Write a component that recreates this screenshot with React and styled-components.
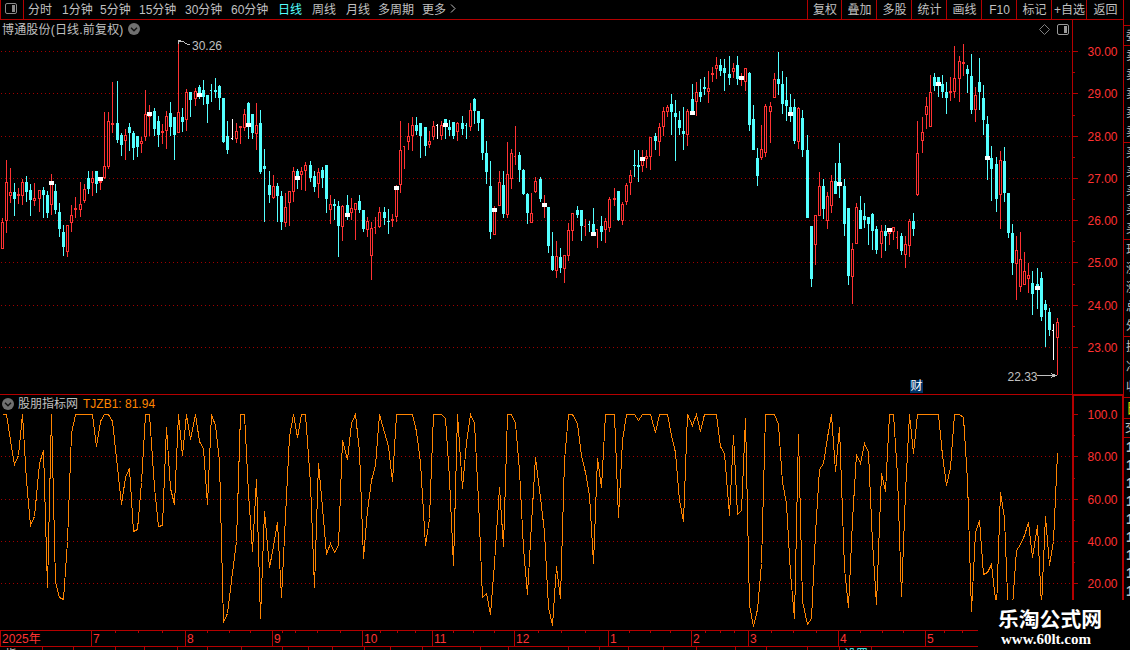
import React from 'react';
import styled, { createGlobalStyle } from 'styled-components';

const RED = '#b40000';
const HOT = '#ff3232';
const CYAN = '#54ffff';
const GRAY = '#c0c0c0';
const ORANGE = '#ff8400';
const FONT = '"Liberation Sans", "Noto Sans CJK SC", sans-serif';

const GlobalStyle = createGlobalStyle`
  * { box-sizing: border-box; }
  body { margin: 0; background: #000; overflow: hidden; }
  svg { display: block; }
  svg text { font-family: ${FONT}; font-size: 12px; }
`;

const Page = styled.div`
  position: relative;
  display: flex;
  width: 1130px;
  height: 650px;
  overflow: hidden;
  background: #000;
  color: ${GRAY};
  font-family: ${FONT};
  font-size: 12px;
`;

const Main = styled.div`
  display: flex;
  flex-direction: column;
  width: 1123px;
  flex: none;
`;

const Toolbar = styled.div`
  display: flex;
  height: 20px;
  flex: none;
  border-bottom: 1px solid ${RED};
  line-height: 20px;
  white-space: nowrap;
`;

const IconCell = styled.div`
  width: 24px;
  padding: 3px 0 0 4px;
  border-left: 1px solid ${RED};
  border-right: 1px solid ${RED};
`;

const Periods = styled.div`
  display: flex;
  flex: 1;
  padding-left: 4px;
`;

const Period = styled.span`
  width: ${p => p.$w}px;
  color: ${p => (p.$active ? CYAN : GRAY)};
`;

const Tools = styled.div`
  display: flex;
  flex: none;
`;

const Tool = styled.div`
  display: flex;
  justify-content: center;
  width: ${p => p.$w || 35}px;
  height: 19px;
  padding-left: 1px;
  border-left: 1px solid ${RED};
`;

const Pane = styled.div`
  position: relative;
  display: flex;
  flex: none;
  height: ${p => p.$h}px;
`;

const PaneTitle = styled.div`
  position: absolute;
  left: 0;
  top: 0;
  display: flex;
  align-items: center;
  gap: 4px;
  height: 18px;
  padding-left: 2px;
  line-height: 18px;
  white-space: nowrap;
`;

const StockName = styled.span`
  padding-top: 2px;
  letter-spacing: 0.18px;
`;

const Reading = styled.span`
  color: ${ORANGE};
  padding-left: 1px;
`;

const PaneIcons = styled.div`
  position: absolute;
  right: 54px;
  top: 4px;
  display: flex;
  gap: 6px;
`;

const Badge = styled.div`
  position: absolute;
  left: 910px;
  top: 360px;
  width: 13px;
  height: 13px;
  background: #003468;
  color: #fff;
  line-height: 13px;
  text-align: center;
`;

const Divider = styled.div`
  height: 1px;
  flex: none;
  background: ${RED};
`;

const Strip = styled.div`
  position: relative;
  height: 3px;
  overflow: hidden;
`;

const Ticker = styled.span`
  position: absolute;
  top: 1px;
  left: ${p => p.$x}px;
  line-height: 14px;
  color: ${p => p.$color};
`;

const Side = styled.div`
  display: flex;
  flex-direction: column;
  width: 7px;
  height: 600px;
  padding-top: 25px;
  overflow: hidden;
  border-left: 1px solid ${RED};
`;

const SideGroup = styled.div`
  display: flex;
  flex-direction: column;
  justify-content: space-around;
  flex: none;
  height: ${p => p.$h}px;
  padding-left: ${p => p.$pad ?? 2}px;
  border-top: 1px solid ${RED};
  color: ${p => p.$color || GRAY};
  font-size: ${p => p.$size || 12}px;
  font-weight: ${p => (p.$bold ? 700 : 400)};
  line-height: 1;
  white-space: nowrap;
`;

const Watermark = styled.div`
  position: absolute;
  left: 978px;
  top: 600px;
  width: 152px;
  height: 50px;
  padding: 6px 0 0 20px;
  background: #000;
  color: #fff;
`;

const MarkName = styled.div`
  font: bold 20.8px/25px "Noto Sans CJK SC", sans-serif;
`;

const MarkUrl = styled.div`
  padding-left: 3px;
  font: bold 15px/16px "Liberation Serif", serif;
`;

const periods = [
  ['分时', 34], ['1分钟', 38], ['5分钟', 39], ['15分钟', 46], ['30分钟', 46], ['60分钟', 47],
  ['日线', 34], ['周线', 34], ['月线', 32], ['多周期', 44], ['更多', 27],
];
const tools = ['复权', '叠加', '多股', '统计', '画线', 'F10', '标记', '+自选', '返回'];

// kind, high, body top, body bottom, low, marker
const candles = `
r 218 222 249 249|r 160 182 221 233|r 168 192 196 203|c 183 192 199 216|r 188 194 196 204|r 179 182 196 205
c 176 182 192 202|c 184 190 200 216|r 183 198 201 206|r 190 190 199 212|c 187 190 195 218|c 191 195 213 218
r 174 184 205 215 181|c 184 191 210 214|c 203 212 229 237|c 225 232 247 256|r 225 225 252 257|r 205 215 223 232
r 197 208 210 218|r 182 204 210 217|r 184 189 201 203|c 171 178 189 194|r 171 178 183 196|c 171 171 184 193
r 177 181 183 190 177|r 112 166 178 179|r 112 121 167 169|r 82 123 125 133|c 81 123 140 143|c 133 135 145 156
r 129 135 141 160|c 123 127 133 151|c 131 133 148 160|c 136 136 147 157|r 137 141 144 153|r 90 114 137 141
r 105 114 117 136 112|c 108 111 129 136|c 116 121 135 147|r 124 131 133 144|r 111 116 131 149|c 102 113 127 136
c 117 117 135 160|r 40 112 133 133|c 108 117 122 132|r 89 92 120 131|c 92 92 100 117|r 88 91 99 106
c 85 87 96 99 93|c 80 90 97 105|c 95 95 104 123|c 84 90 91 102|c 78 90 92 98|c 85 86 98 110
c 98 98 142 143|c 121 136 150 154|w 119 138 139 140|r 123 131 139 143|r 126 126 128 144|r 109 114 128 131
c 102 103 127 139 123|c 114 114 133 139|r 103 125 134 150|c 110 123 172 174|c 149 166 169 222|c 171 185 195 203
r 175 186 198 199|c 183 186 196 222|c 191 196 222 230|r 193 207 223 227|r 191 191 203 226|r 167 171 192 202
c 169 171 176 189 176|r 167 171 175 190|r 162 165 171 191|c 161 165 178 182|c 171 176 187 192|r 168 172 184 198
c 167 170 178 188|c 165 165 199 213|r 195 204 210 224|c 199 204 206 220|c 201 206 226 257|r 205 206 227 241
c 195 205 215 220 213|r 198 208 213 220|r 203 203 210 240|c 195 201 210 213|c 210 210 229 232|r 217 221 230 237
r 222 228 256 280|r 217 227 228 234|r 207 212 227 228|c 207 212 218 225|d 209 221 222 234|r 214 219 221 227
r 185 189 217 222 186|r 121 150 185 193|r 146 146 147 169|r 123 136 142 150|r 117 125 136 151|c 117 125 131 135
c 123 123 136 158|c 127 127 146 156|r 131 141 145 148|r 121 126 137 140|w 124 125 126 139|r 121 125 136 140
c 119 119 126 139 123|c 120 127 130 136|c 122 122 136 139|r 122 123 132 141|c 116 123 129 135|c 123 125 126 139
r 103 110 127 131|c 98 99 111 124|c 111 111 123 131|c 119 119 153 160|c 141 153 172 184|c 161 186 232 239
r 206 210 235 235 208|r 171 182 206 206|c 171 185 214 218|r 142 174 215 218|r 149 153 179 189|r 126 156 157 165
c 152 155 170 182|c 169 170 194 195|c 193 194 213 224|r 193 213 223 223|r 177 181 192 193|c 177 179 199 202
r 195 203 207 218 203|c 207 207 246 253|c 232 256 270 271|r 241 256 271 278|c 248 257 268 273|r 255 255 269 283
r 223 230 256 261|r 213 213 231 241|c 206 210 215 218|c 210 210 226 241|r 219 226 227 236|c 221 224 225 232
c 208 224 236 236 232|r 229 229 230 248|c 216 226 232 241|r 218 221 230 243|r 197 199 228 232|r 188 198 200 206
c 191 191 220 221|r 202 204 221 225|r 183 185 202 205|r 170 175 183 195|d 150 165 166 177|c 150 165 167 182
r 150 159 166 172 157|r 150 156 159 168|r 137 137 157 170|c 133 136 141 150|r 123 127 142 156|r 107 111 127 136
r 105 107 112 117|c 94 104 112 135|c 100 113 117 161|c 111 120 128 135|c 107 131 134 150|r 109 111 135 146
c 84 99 112 115 111|r 82 92 102 116|c 79 92 97 102|c 77 87 89 95|r 71 88 92 103|r 67 73 75 82
r 57 65 69 79|c 59 65 71 76|c 59 68 73 91|c 56 74 78 85|r 63 68 72 78|c 56 65 79 85
r 73 76 80 86 76|r 68 68 82 91|c 72 73 125 131|c 105 119 150 150|c 148 158 176 186|r 125 149 158 160
r 104 106 153 157|r 102 106 112 143|r 73 79 98 98|c 52 79 84 95|c 71 84 104 114|c 77 100 106 121
c 94 107 116 122 112|c 99 107 141 144|r 107 108 142 149|c 110 118 150 157|c 135 150 218 218|c 226 226 279 287
r 215 215 245 265|r 172 186 216 216|c 179 186 209 219|r 192 196 221 229|r 175 181 206 213|c 163 181 194 194
c 143 163 185 198 182|c 179 186 224 236|c 208 208 276 285|r 243 249 277 304|r 203 207 244 244|c 196 210 229 229
c 203 216 220 228|c 217 217 224 245|c 213 214 231 250|c 226 229 250 254|r 225 231 244 258|c 225 231 236 251
r 228 230 234 245 228|r 227 227 232 240|r 231 237 238 249|c 233 236 251 255|r 236 244 255 268|r 219 221 246 257
c 213 221 229 236|r 121 153 195 196|r 117 132 141 153|r 97 106 115 129|r 75 92 127 127|c 73 77 86 91
c 77 77 86 97 82|c 75 84 92 98|c 82 92 98 114|r 77 91 93 101|r 46 78 92 98|r 56 61 79 102
r 44 62 64 76|c 65 69 74 93|c 54 76 110 114|r 87 95 110 122|c 58 82 92 110|c 85 98 120 135
c 116 124 160 180 156|c 146 158 169 201|c 157 164 199 212|r 151 160 195 229|c 147 161 193 202|c 193 193 233 238
c 224 233 263 275|r 236 250 264 300|r 232 259 287 292|r 252 271 285 285|r 263 275 279 293|c 271 283 294 315
c 268 284 290 309 286|c 272 278 317 321|c 300 304 310 347|c 308 312 330 336|w 324 330 331 360|r 318 322 338 375
`.trim().split(/[|\n]/).map(row => {
  const [kind, ...nums] = row.split(' ');
  const [high, top, bottom, low, marker] = nums.map(Number);
  return { kind, high, top, bottom, low, marker };
});

const levels = [
  414, 414, 440, 464, 455, 414, 480, 525, 516, 463, 450, 587, 414, 582, 597, 599, 541, 433, 414, 414,
  414, 414, 414, 446, 421, 414, 414, 421, 467, 504, 477, 468, 531, 529, 482, 414, 414, 487, 526, 525,
  427, 488, 504, 414, 455, 414, 439, 414, 441, 448, 504, 414, 425, 461, 622, 613, 572, 541, 414, 414,
  493, 551, 479, 618, 511, 567, 546, 522, 597, 516, 436, 414, 437, 414, 414, 483, 587, 463, 507, 554,
  543, 552, 545, 440, 459, 423, 414, 451, 558, 510, 480, 465, 414, 432, 446, 481, 414, 414, 414, 414,
  414, 431, 462, 545, 518, 414, 414, 414, 418, 478, 565, 414, 488, 442, 414, 423, 500, 597, 593, 614,
  563, 487, 546, 414, 414, 423, 470, 548, 594, 523, 457, 497, 532, 607, 625, 566, 598, 460, 414, 414,
  423, 455, 472, 495, 563, 458, 487, 414, 414, 414, 517, 440, 414, 414, 414, 420, 414, 414, 414, 432,
  414, 414, 414, 435, 452, 500, 521, 414, 425, 414, 431, 414, 414, 414, 414, 446, 453, 515, 435, 514,
  510, 418, 605, 626, 609, 563, 414, 414, 414, 424, 482, 503, 573, 618, 434, 601, 624, 618, 533, 469,
  463, 437, 414, 471, 427, 568, 607, 520, 454, 463, 443, 452, 542, 604, 473, 491, 414, 414, 475, 596,
  492, 414, 453, 414, 414, 414, 414, 414, 414, 455, 485, 467, 414, 414, 417, 480, 611, 532, 520, 574,
  572, 564, 608, 492, 518, 620, 606, 550, 544, 535, 522, 557, 525, 606, 516, 565, 541, 453,
];

const barX = i => Math.floor(2.04 + i * 4.1073);

const priceTicks = [[51, '30.00'], [93, '29.00'], [136, '28.00'], [178, '27.00'], [220, '26.00'], [262, '25.00'], [305, '24.00'], [347, '23.00']];
const priceMinor = [72, 115, 157, 199, 241, 284, 326];
const levelTicks = [[414, '100.0'], [456, '80.00'], [499, '60.00'], [541, '40.00'], [583, '20.00']];
const levelMinor = [435, 478, 520, 562];

const months = [[0, '2025年'], [91, '7'], [185, '8'], [272, '9'], [362, '10'], [432, '11'], [514, '12'], [608, '1'], [691, '2'], [748, '3'], [838, '4'], [925, '5']];
const weeks = [115, 138, 162, 207, 229, 250, 282, 295, 317, 340, 380, 397, 415, 453, 473, 494, 538, 561, 585, 629, 650, 670, 705, 720, 734, 771, 793, 816, 860, 882, 903, 944, 962];
const stripTicks = [42, 73, 115, 144, 177, 207, 241, 282, 308, 332, 364, 390, 422, 480, 508, 568, 599, 628, 663, 696, 735, 766, 807, 839, 871];

const PanelIcon = ({ color = '#9a9a9a' }) => (
  <svg width="12" height="11" viewBox="0 0 12 11">
    <rect x="0.5" y="0.5" width="11" height="10" rx="1.5" fill="none" stroke={color} />
    <rect x="7" y="2" width="3" height="7" fill={color} />
  </svg>
);

const DropIcon = () => (
  <svg width="12" height="12" viewBox="0 0 12 12">
    <circle cx="6" cy="6" r="6" fill="#707070" />
    <path d="M3 4.7 6 7.7 9 4.7" fill="none" stroke="#111" strokeWidth="1.4" />
  </svg>
);

const GridLines = ({ rows }) => rows.map(y => (
  <line key={y} x1="1" x2="1070" y1={y + 0.5} y2={y + 0.5} stroke="#a00000" strokeDasharray="1 3" />
));

const Candle = ({ x, kind, high, top, bottom, low, marker }) => {
  const color = { r: HOT, c: CYAN, d: CYAN, w: '#fff' }[kind];
  const h = bottom - top;
  return (
    <g fill={color}>
      <rect x={x} y={high} width="1" height={low - high} />
      <rect x={x - 1} y={top} width={h === 1 && kind !== 'd' ? 2 : 3} height={h} />
      {kind === 'r' && h > 2 && <rect x={x} y={top + 1} width="1" height={h - 2} fill="#000" />}
      {marker && <rect x={x - 2} y={marker} width="5" height="4" fill="#fff" />}
    </g>
  );
};

const PriceChart = () => (
  <svg width="1072" height="374" viewBox="0 20 1072 374" shapeRendering="crispEdges">
    <GridLines rows={priceTicks.map(t => t[0])} />
    {candles.map((c, i) => <Candle key={i} x={barX(i)} {...c} />)}
    <path d="M178.5 44V40.5H181M179 41.5H183L186 43.5 190 45" fill="none" stroke={GRAY} />
    <text x="192" y="50" fill={GRAY}>30.26</text>
    <text x="1007.5" y="381" fill={GRAY}>22.33</text>
    <path d="M1037 375.5H1056M1051 373.5 1056 375.5 1051 377.5" fill="none" stroke={GRAY} />
  </svg>
);

const LevelChart = () => (
  <svg width="1072" height="235" viewBox="0 395 1072 235" shapeRendering="crispEdges">
    <GridLines rows={levelTicks.slice(1).map(t => t[0])} />
    <polyline
      points={levels.map((y, i) => `${barX(i) + 0.5},${y + 0.5}`).join(' ')}
      fill="none"
      stroke={ORANGE}
    />
  </svg>
);

const Axis = ({ top, height, ticks, minor, heavy }) => (
  <svg width="51" height={height} viewBox={`1072 ${top} 51 ${height}`} shapeRendering="crispEdges">
    <g fill={RED}>
      <rect x="1072" y={top} width={heavy ? 2 : 1} height={height} />
      {heavy && <rect x="1072" y={top} width="51" height="1" />}
      {heavy && <rect x="1122" y={top} width="1" height={height} />}
      {ticks.map(([y]) => <rect key={y} x="1072" y={y} width="6" height="1" />)}
      {minor.map(y => <rect key={y} x="1072" y={y} width="3" height="1" />)}
    </g>
    {ticks.map(([y, label]) => (
      <text key={y} x="1117.5" y={y + 5} textAnchor="end" fill={HOT}>{label}</text>
    ))}
  </svg>
);

const TimeAxis = () => (
  <svg width="1123" height="17" viewBox="0 630 1123 17" shapeRendering="crispEdges">
    <path d="M0 630.5H1123M0 646.5H1123" stroke={RED} />
    {weeks.map(x => <rect key={x} x={x} y="631" width="1" height="2" fill={RED} />)}
    {months.map(([x, label]) => (
      <g key={x}>
        <rect x={x} y="630" width="1" height="16" fill={RED} />
        <text x={x + 2} y="643" fill={HOT}>{label}</text>
      </g>
    ))}
  </svg>
);

const App = () => (
  <Page>
    <GlobalStyle />
    <Main>
      <Toolbar>
        <IconCell><PanelIcon color="#8a8a8a" /></IconCell>
        <Periods>
          {periods.map(([name, w]) => (
            <Period key={name} $w={w} $active={name === '日线'}>{name}</Period>
          ))}
          <svg width="8" height="18" viewBox="0 0 8 18">
            <path d="M2 4.5 6 8.5 2 12.5" fill="none" stroke={GRAY} />
          </svg>
        </Periods>
        <Tools>
          {tools.map((name, i) => (
            <Tool key={name} $w={i === 0 ? 34 : i === 8 ? 37 : 35}>{name}</Tool>
          ))}
        </Tools>
      </Toolbar>

      <Pane $h={374}>
        <PriceChart />
        <Axis top={20} height={374} ticks={priceTicks} minor={priceMinor} />
        <PaneTitle><StockName>博通股份(日线.前复权)</StockName> <DropIcon /></PaneTitle>
        <PaneIcons>
          <svg width="12" height="11" viewBox="0 0 12 11">
            <path d="M5.5 0.5 10.5 5.5 5.5 10.5 0.5 5.5Z" fill="none" stroke="#808080" />
          </svg>
          <PanelIcon />
        </PaneIcons>
        <Badge>财</Badge>
      </Pane>
      <Divider />
      <Pane $h={235}>
        <LevelChart />
        <Axis top={395} height={235} ticks={levelTicks} minor={levelMinor} heavy />
        <PaneTitle><DropIcon /> 股朋指标网 <Reading>TJZB1: 81.94</Reading></PaneTitle>
      </Pane>
      <TimeAxis />
      <Strip>
        <svg width="978" height="3" viewBox="0 0 978 3" shapeRendering="crispEdges">
          {stripTicks.map(x => <rect key={x} x={x} y="0" width="1" height="3" fill={RED} />)}
        </svg>
        <Ticker $x={5} $color={GRAY}>指</Ticker>
        <Ticker $x={844} $color={CYAN}>设置</Ticker>
      </Strip>
    </Main>

    <Side>
      <SideGroup $h={20}><span>委</span></SideGroup>
      <SideGroup $h={97}>{[...'卖卖卖卖卖'].map((t, i) => <span key={i}>{t}</span>)}</SideGroup>
      <SideGroup $h={97}>{[...'买买买买买'].map((t, i) => <span key={i}>{t}</span>)}</SideGroup>
      <SideGroup $h={97}>{[...'现涨涨总外'].map((t, i) => <span key={i}>{t}</span>)}</SideGroup>
      <SideGroup $h={61}>{[...'换净收'].map((t, i) => <span key={i}>{t}</span>)}</SideGroup>
      <SideGroup $h={21} $color="#d8d800" $size={14}><span>日</span></SideGroup>
      <SideGroup $h={19} $pad={1}><span>交</span></SideGroup>
      <SideGroup $h={163} $size={14} $bold>{[...'111111111'].map((t, i) => <span key={i}>{t}</span>)}</SideGroup>
    </Side>

    <Watermark>
      <MarkName>乐淘公式网</MarkName>
      <MarkUrl>www.60lt.com</MarkUrl>
    </Watermark>
  </Page>
);

export default App;
